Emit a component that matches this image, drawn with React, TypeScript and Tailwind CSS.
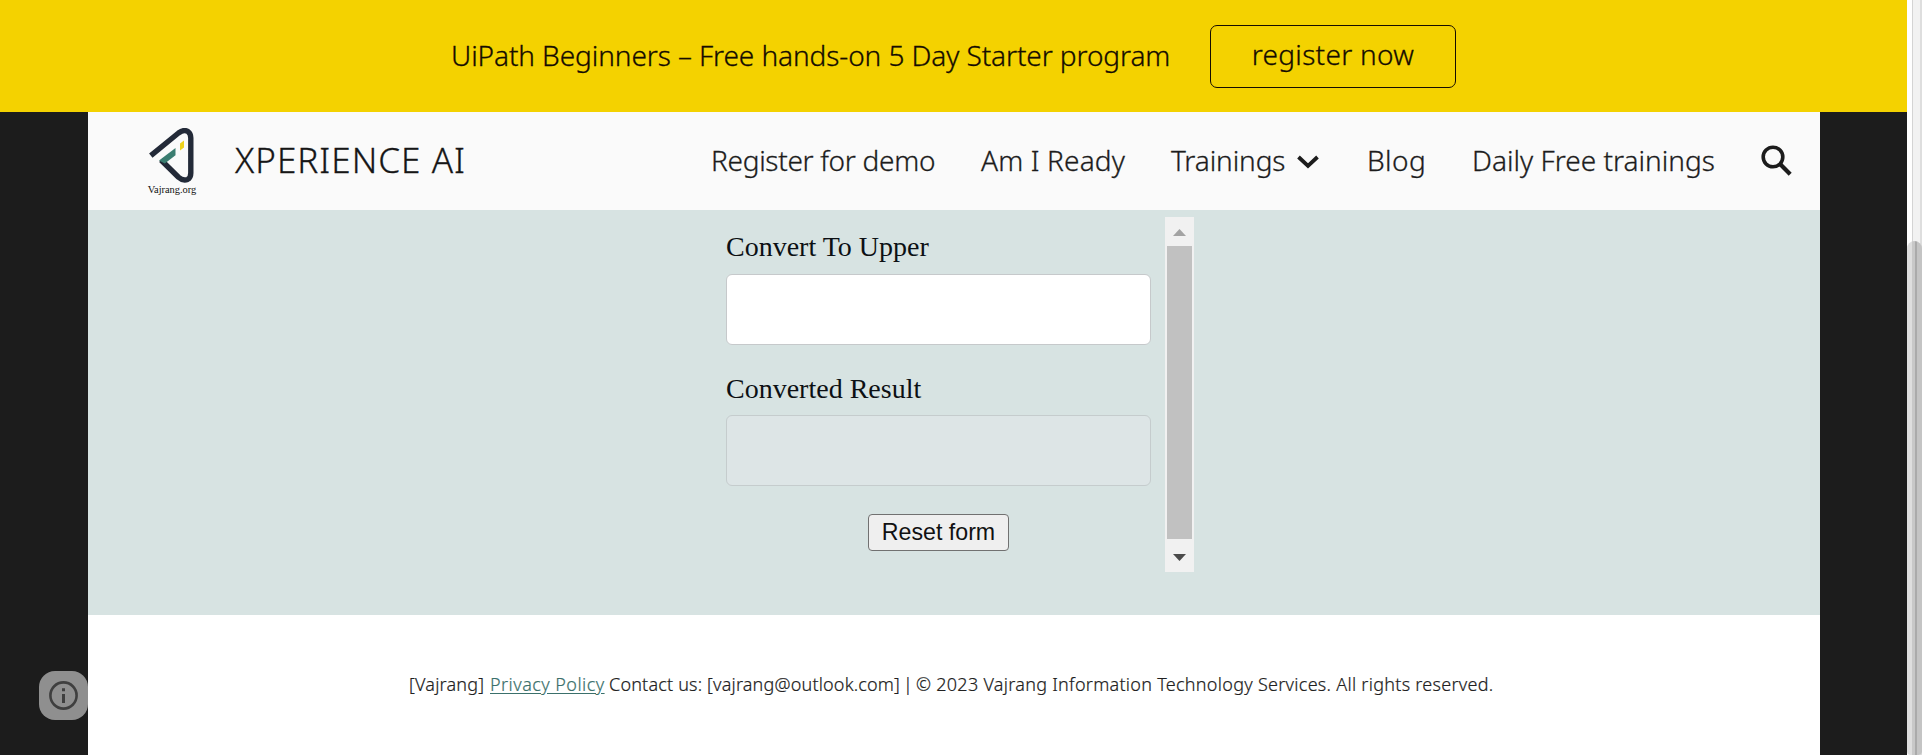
const nav = "font-light text-[28px] leading-[38px] whitespace-nowrap text-[#1c1c1c]";

function Logo() {
  return (
    <div className="flex w-[50px] shrink-0 flex-col items-center pt-px [-webkit-text-stroke:0px]">
      <svg width="46" height="56" viewBox="0 0 46 56" fill="none" className="block">
        <path d="M1.8 27.6 L29.5 5 Q35 1 39 3.6 Q41.8 5.6 41.8 10 V45 Q41.8 49.8 38.6 51.4 Q34 53.2 29.5 49.2 L12 32" stroke="#232a38" strokeWidth="5.4" strokeLinejoin="round" />
        <path d="M10 32.5 L26.5 20 V27.2 L15.8 35.6 Z" fill="#3a7d70" />
        <path d="M31 15.5 L35 12.5 V19.5 L31 22.5 Z" fill="#efd31c" />
      </svg>
      <span className="whitespace-nowrap font-['Liberation_Serif',serif] text-[10.4px] leading-3 text-[#111]">Vajrang.org</span>
    </div>
  );
}

function Field({ label, disabled = false, box, gap }: { label: string; disabled?: boolean; box: string; gap: string }) {
  return (
    <label className={`flex flex-col font-['Liberation_Serif',serif] text-[28px] leading-8 text-[#0c1014] ${gap}`}>
      {label}
      <input disabled={disabled} className={`h-[71px] w-[425px] rounded-md border px-4 ${box}`} />
    </label>
  );
}

export default function App() {
  return (
    <div className="flex h-[755px] w-full overflow-hidden bg-[#1c1c1c] font-['Noto_Sans','Open_Sans',sans-serif]">
      <div className="relative flex min-w-0 flex-1 flex-col">
        <div className="flex h-28 shrink-0 items-center bg-[#f4d200] pl-[451px] font-light text-[28px] text-[#150c00] [-webkit-text-stroke:0.3px]">
          <span className="w-[759px] whitespace-nowrap pb-[3px] tracking-[-0.09px]">UiPath Beginners – Free hands-on 5 Day Starter program</span>
          <button className="mt-px flex h-[63px] w-[246px] items-center justify-center rounded-[7px] border border-[#150c00] pb-[6px] tracking-[0.3px]">register now</button>
        </div>

        <div className="mr-[87px] ml-[88px] flex flex-1 flex-col bg-white">
          <header className="flex h-[98px] shrink-0 items-center bg-[#fafafa] pl-[59px] [-webkit-text-stroke:0.3px]">
            <Logo />
            <span className="ml-[38px] w-[476px] pb-0.5 text-[35px] leading-10 font-light tracking-[1.05px] whitespace-nowrap text-[#161616]">XPERIENCE AI</span>
            <nav className="flex items-center pb-0.5">
              <span className={`${nav} w-[270px] tracking-[-0.3px]`}>Register for demo</span>
              <span className={`${nav} w-[190px] tracking-[0.15px]`}>Am I Ready</span>
              <span className={`${nav} flex w-[196px] items-center`}>
                <span className="tracking-[-0.1px]">Trainings</span>
                <svg width="22" height="14" viewBox="0 0 22 14" fill="none" className="mt-1 ml-[12px]">
                  <path d="M1.5 2 L11 11 L20.5 2" stroke="#1c1c1c" strokeWidth="3.8" />
                </svg>
              </span>
              <span className={`${nav} w-[105px] tracking-[0.4px]`}>Blog</span>
              <span className={`${nav} w-[289px] tracking-[0.02px]`}>Daily Free trainings</span>
              <svg width="31" height="31" viewBox="0 0 31 31" fill="none" className="shrink-0">
                <circle cx="12" cy="12" r="9.8" stroke="#1c1c1c" strokeWidth="3.6" />
                <path d="M18.8 18.8 L29.2 29.2" stroke="#1c1c1c" strokeWidth="4.2" />
              </svg>
            </nav>
          </header>

          <main className="flex h-[405px] shrink-0 bg-[#d7e3e2] pt-[7px] pl-[638px]">
            <form className="flex w-[439px] flex-col pt-[14px]">
              <Field label="Convert To Upper" gap="gap-[11px]" box="border-[#c6c9cb] bg-white" />
              <div className="mt-7">
                <Field label="Converted Result" disabled gap="gap-[10px]" box="border-[#c5cccd] bg-[#dde5e6]" />
              </div>
              <button type="reset" className="mt-7 ml-[142px] h-[37px] w-[141px] rounded border border-[#717171] bg-[#efefef] pb-0.5 font-['Liberation_Sans',sans-serif] text-[23.2px] leading-8 text-[#111]">Reset form</button>
            </form>
            <div className="flex h-[355px] w-[29px] flex-col items-center bg-[#f1f1f1]">
              <svg width="29" height="29" viewBox="0 0 29 29"><path d="M8 19 L14.5 12 L21 19 Z" fill="#a3a3a3" /></svg>
              <div className="h-[293px] w-[25px] bg-[#c1c1c1]" />
              <svg width="29" height="33" viewBox="0 0 29 33"><path d="M8 15 L21 15 L14.5 22 Z" fill="#4a4a4a" /></svg>
            </div>
          </main>

          <footer className="flex h-[138px] items-center pl-[321px] text-[18px] leading-6 font-light whitespace-nowrap text-[#212121] [-webkit-text-stroke:0.2px]">
            <span className="w-[81px] tracking-[0.2px]">[Vajrang]</span>
            <a className="w-[115px] tracking-[0.45px] text-[#3b706b] underline underline-offset-2">Privacy Policy</a>
            <span className="ml-1 w-[294px] tracking-[0.18px]">Contact us: [vajrang@outlook.com]</span>
            <span className="w-[13px]">|</span>
            <span className="tracking-[0.28px]">© 2023 Vajrang Information Technology Services. All rights reserved.</span>
          </footer>
        </div>

        <button aria-label="Info" className="absolute top-[671px] left-[39px] flex size-[49px] items-center justify-center rounded-2xl bg-[#8f8f8f]">
          <svg width="29" height="29" viewBox="0 0 29 29" fill="none">
            <circle cx="14.5" cy="14.5" r="13.1" stroke="#3f3f3f" strokeWidth="2.6" />
            <path d="M14.5 13 V22 M14.5 7.3 V10.3" stroke="#3f3f3f" strokeWidth="3" />
          </svg>
        </button>
      </div>

      <div className="flex w-[15px] shrink-0 flex-col bg-[linear-gradient(to_right,#fff_0_5px,#d4d4d4_5px_6px,#f2f2f2_6px_13px,#dedede_13px)]">
        <div className="mt-[241px] h-[514px] rounded-t-lg rounded-b-sm bg-[linear-gradient(to_right,#dedede_0_5px,#c8c8c8_5px_8px,#aaa_8px_10px,#c4c4c4_10px)]" />
      </div>
    </div>
  );
}
